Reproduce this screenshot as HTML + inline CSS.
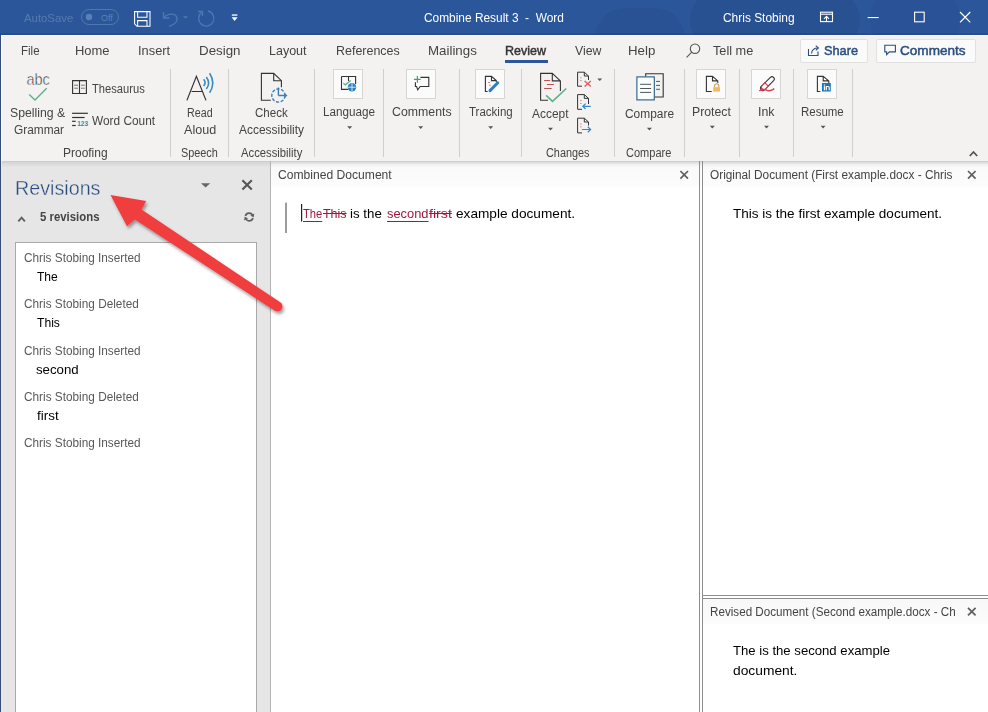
<!DOCTYPE html><html><head><meta charset="utf-8"><style>
html,body{margin:0;padding:0}
body{width:988px;height:712px;position:relative;overflow:hidden;font-family:"Liberation Sans",sans-serif;background:#fff}
.a{position:absolute}
.t{position:absolute;white-space:pre;transform-origin:0 0}
svg{position:absolute;overflow:visible}
</style></head><body>
<!-- window left border -->
<div class="a" style="left:0;top:0;width:988px;height:35px;background:#2b579a"></div>
<div class="a" style="left:0;top:0;width:988px;height:35px;overflow:hidden">
<div class="a" style="left:690px;top:-10px;width:170px;height:60px;border-radius:30px;background:rgba(10,25,70,0.09)"></div>
<div class="a" style="left:595px;top:8px;width:90px;height:60px;border-radius:45px;background:rgba(10,25,70,0.07)"></div>
<div class="a" style="left:870px;top:-20px;width:90px;height:80px;border-radius:45px;background:rgba(10,25,70,0.05)"></div>
</div>
<!-- ribbon -->
<div class="a" style="left:1px;top:35px;width:987px;height:126px;background:#f3f2f1"></div>
<div class="a" style="left:1px;top:35px;width:987px;height:1px;background:#f7f8fa"></div>
<!-- below ribbon -->
<div class="a" style="left:1px;top:161px;width:270px;height:551px;background:#e6e6e6"></div>
<div class="a" style="left:1px;top:161px;width:269px;height:6px;background:linear-gradient(#c8c8c8,#d8d8d8 30%,#e4e4e4)"></div>
<div class="a" style="left:1px;top:161px;width:1px;height:551px;background:#e2eaf5"></div>
<div class="a" style="left:1px;top:35px;width:1px;height:126px;background:#fbfcfe"></div>
<div class="a" style="left:0;top:33px;width:988px;height:2px;background:rgba(20,40,80,0.18)"></div>
<div class="a" style="left:270px;top:161px;width:1px;height:551px;background:#b4b4b4"></div>
<!-- doc panes -->
<div class="a" style="left:271px;top:161px;width:717px;height:551px;background:#fff"></div>
<div class="a" style="left:271px;top:161px;width:717px;height:26px;background:linear-gradient(#c8c8c8 0px,#dedede 1.5px,#f3f3f3 4px,#fafafa 7px,#fcfcfc 26px)"></div>
<div class="a" style="left:699px;top:161px;width:1px;height:551px;background:#8e8e8e"></div>
<div class="a" style="left:702px;top:161px;width:1px;height:551px;background:#8e8e8e"></div>
<div class="a" style="left:703px;top:595px;width:285px;height:1px;background:#8e8e8e"></div>
<div class="a" style="left:703px;top:598px;width:285px;height:1px;background:#8e8e8e"></div>
<div class="a" style="left:703px;top:599px;width:285px;height:25px;background:linear-gradient(#f8f8f8,#fcfcfc)"></div>
<div class="a" style="left:0;top:35px;width:1px;height:677px;background:#34507a"></div>
<!-- revisions list box -->
<div class="a" style="left:15px;top:242px;width:240px;height:480px;background:#fff;border:1px solid #a9a9a9"></div>
<!-- tab underline -->
<div class="a" style="left:505px;top:60px;width:43px;height:3px;background:#2b579a"></div>
<!-- share / comments buttons -->
<div class="a" style="left:800px;top:39px;width:66px;height:22px;background:#fafafa;border:1px solid #e1e1e1;border-radius:2px"></div>
<div class="a" style="left:876px;top:39px;width:98px;height:22px;background:#fafafa;border:1px solid #e1e1e1;border-radius:2px"></div>
<!-- ribbon separators -->
<div class="a" style="left:170px;top:69px;width:1px;height:88px;background:#cfcfcf"></div>
<div class="a" style="left:228px;top:69px;width:1px;height:88px;background:#cfcfcf"></div>
<div class="a" style="left:314px;top:69px;width:1px;height:88px;background:#cfcfcf"></div>
<div class="a" style="left:383px;top:69px;width:1px;height:88px;background:#cfcfcf"></div>
<div class="a" style="left:459px;top:69px;width:1px;height:88px;background:#cfcfcf"></div>
<div class="a" style="left:521px;top:69px;width:1px;height:88px;background:#cfcfcf"></div>
<div class="a" style="left:614px;top:69px;width:1px;height:88px;background:#cfcfcf"></div>
<div class="a" style="left:684px;top:69px;width:1px;height:88px;background:#cfcfcf"></div>
<div class="a" style="left:739px;top:69px;width:1px;height:88px;background:#cfcfcf"></div>
<div class="a" style="left:793px;top:69px;width:1px;height:88px;background:#cfcfcf"></div>
<div class="a" style="left:852px;top:69px;width:1px;height:88px;background:#cfcfcf"></div>
<!-- icon boxes -->
<div class="a" style="left:333px;top:69px;width:28px;height:28px;background:#fbfbfb;border:1px solid #d6d6d6"></div>
<div class="a" style="left:406px;top:69px;width:28px;height:28px;background:#fbfbfb;border:1px solid #d6d6d6"></div>
<div class="a" style="left:475px;top:69px;width:28px;height:28px;background:#fbfbfb;border:1px solid #d6d6d6"></div>
<div class="a" style="left:696px;top:69px;width:28px;height:28px;background:#fbfbfb;border:1px solid #d6d6d6"></div>
<div class="a" style="left:751px;top:69px;width:28px;height:28px;background:#fbfbfb;border:1px solid #d6d6d6"></div>
<div class="a" style="left:807px;top:69px;width:28px;height:28px;background:#fbfbfb;border:1px solid #d6d6d6"></div>
<svg width="988" height="712" viewBox="0 0 988 712" style="left:0;top:0">
<!-- ===== title bar ===== -->
<g fill="none" stroke="#4f78b2" stroke-width="1">
  <rect x="81.5" y="9.5" width="37" height="15" rx="7.5"/>
</g>
<circle cx="89" cy="17" r="3.2" fill="#5a80b8"/>
<text x="101" y="20.6" font-size="9" fill="#5a80b8" font-family="Liberation Sans">Off</text>
<!-- save -->
<g fill="none" stroke="#fff" stroke-width="1.05">
  <path d="M134.6 11.6 H150 V26.3 H137 L134.6 23.9 Z"/>
  <path d="M137.6 11.6 V17.2 H147 V11.6"/>
  <path d="M137.6 26.3 V20.6 H147 V26.3"/>
</g>
<!-- undo (dim) -->
<g fill="none" stroke="#4f77b0" stroke-width="1.3">
  <path d="M164 17.5 C168 13,176 13,177 18 C178 22,173 25,169 26.3"/>
  <path d="M163.5 12 V18 H169.5"/>
</g>
<path d="M183 16.3 H188 L185.5 18.8 Z" fill="#4f77b0"/>
<!-- redo (dim) -->
<g fill="none" stroke="#4f77b0" stroke-width="1.3">
  <path d="M201.5 12.5 A7.6 7.6 0 1 0 208 11"/>
  <path d="M198 11.5 H202.5 V16"/>
</g>
<!-- customize -->
<rect x="231.8" y="14.4" width="5.6" height="1.3" fill="#fff"/>
<path d="M231.6 17.3 H237.6 L234.6 21 Z" fill="#fff"/>
<!-- ribbon display options -->
<g fill="none" stroke="#fff" stroke-width="1.1">
  <rect x="820.5" y="12.2" width="12" height="9.4"/>
  <path d="M820.5 14.2 H832.5"/>
  <path d="M826.5 21.5 V16.5 M824 18.8 L826.5 16.3 L829 18.8"/>
</g>
<!-- min / max / close -->
<rect x="867.7" y="17" width="11" height="1.1" fill="#fff"/>
<rect x="914.6" y="12.2" width="9.6" height="9.6" fill="none" stroke="#fff" stroke-width="1.1"/>
<path d="M960 12 L970.3 22.3 M970.3 12 L960 22.3" stroke="#fff" stroke-width="1.2" fill="none"/>

<!-- ===== tabs row ===== -->
<g fill="none" stroke="#555" stroke-width="1.1">
  <circle cx="695" cy="48.7" r="4.7"/>
  <path d="M691.8 52.2 L686.6 57.4"/>
</g>
<!-- share icon -->
<g fill="none" stroke="#2b4f80" stroke-width="1.1">
  <path d="M808.5 49 V55.5 H818 V51.5"/>
  <path d="M811.5 53.5 C812 49.5,814 48,818 48"/>
  <path d="M815.8 45.6 L818.4 48 L815.8 50.4"/>
</g>
<!-- comments icon -->
<path d="M884.8 45.3 H895.4 V51.9 H889.4 L886.6 54.6 V51.9 H884.8 Z" fill="none" stroke="#2b4f80" stroke-width="1.1"/>

<!-- ===== ribbon icons ===== -->
<!-- abc + check -->
<text x="26.4" y="84.6" font-size="16.2" fill="#333" stroke="#f3f2f1" stroke-width="0.45" font-family="Liberation Sans" textLength="23.4" lengthAdjust="spacingAndGlyphs">abc</text>
<path d="M29.2 94.4 L35 100 L46.7 88.3" fill="none" stroke="#5bb28a" stroke-width="1.4"/>
<!-- thesaurus book -->
<g fill="none" stroke="#333" stroke-width="1.1">
  <path d="M72.6 80.6 H86.4 V93.5 H72.6 Z M79.5 80.6 V93.5"/>
</g>
<rect x="74.2" y="84.7" width="3.8" height="1" fill="#c0504d"/>
<rect x="81" y="84.7" width="3.8" height="1" fill="#777"/>
<rect x="74.2" y="87.7" width="3.8" height="1" fill="#777"/>
<rect x="81" y="87.7" width="3.8" height="1" fill="#777"/>
<!-- word count -->
<rect x="72.1" y="112.7" width="15.8" height="1.2" fill="#333"/>
<rect x="72.1" y="116.9" width="12.5" height="1.2" fill="#333"/>
<rect x="72.1" y="120.7" width="3.6" height="1.2" fill="#333"/>
<rect x="72.1" y="124.9" width="3.6" height="1.2" fill="#333"/>
<text x="77.2" y="126.2" font-size="7.6" font-weight="700" fill="#2d87bf" font-family="Liberation Sans" textLength="10.8" lengthAdjust="spacingAndGlyphs">123</text>
<!-- read aloud -->
<g fill="none" stroke="#333" stroke-width="1.2">
  <path d="M186.9 100.4 L196.4 76.3 L206 100.4 M191.6 91.5 H202.3"/>
</g>
<g fill="none" stroke="#3c8bbf" stroke-width="1.6">
  <path d="M203.6 79.2 Q206.6 82.6 203.6 86"/>
  <path d="M206.3 76.9 Q211 83 206.3 89.1"/>
  <path d="M209.6 73.2 Q216 83 209.6 92.7"/>
</g>
<!-- check accessibility -->
<g fill="none" stroke="#333" stroke-width="1.1">
  <path d="M270.8 100.3 H261.4 V73.4 H273.7 L281.4 80.7 V87.2"/>
  <path d="M273.7 73.4 V80.7 H281.4"/>
</g>
<g fill="none" stroke="#3d7fb5" stroke-width="1.4">
  <circle cx="278.4" cy="95.5" r="6.6" stroke-dasharray="3.2 1.6"/>
  <path d="M278.4 95.5 V87.5 M278.4 95.5 H286"/>
</g>
<path d="M284.5 93 L287.5 95.5 L284.5 98 Z" fill="#3d7fb5"/>
<!-- language -->
<g fill="none" stroke="#333" stroke-width="1.1">
  <path d="M341.5 76.5 H355.6 V84 M341.5 76.5 V89.4 H348.5 M348.5 76.5 V81"/>
</g>
<path d="M343.4 83.2 L345.3 84.8 L350.8 80.4" fill="none" stroke="#5bb28a" stroke-width="1.3"/>
<circle cx="352" cy="87.2" r="4.2" fill="#2d7fc0"/>
<path d="M348.2 87.2 H355.8 M352 83.2 V91.2" stroke="#fff" stroke-width="0.8"/>
<!-- comments -->
<path d="M420.4 77.4 H428.8 V86.5 H420.2 L417.7 89.8 L416.6 86.5 H415.4 V82.2" fill="none" stroke="#333" stroke-width="1.1"/>
<path d="M413.9 79.4 H420.7 M417.4 76.1 V82.7" stroke="#3aa46f" stroke-width="1.2"/>
<!-- tracking -->
<g fill="none" stroke="#333" stroke-width="1.1">
  <path d="M487.7 91.5 H485.4 V76.4 H491.5 L496.3 80.6 V82 M491.5 76.4 V80.6 H496.3"/>
</g>
<rect x="488.2" y="82" width="1.8" height="0.9" fill="#d4607a"/>
<rect x="489" y="84.8" width="1.7" height="0.9" fill="#d4607a"/>
<path d="M490 90.6 L497.8 82.8" stroke="#2f7ec0" stroke-width="3" stroke-linecap="round"/>
<!-- accept -->
<g fill="none" stroke="#333" stroke-width="1.1">
  <path d="M548 100.3 H540.6 V73.4 H552.3 L560.4 80.9 V91 M552.3 73.4 V80.9 H560.4"/>
</g>
<rect x="544.1" y="80" width="6" height="1" fill="#c0504d"/>
<rect x="546.9" y="84" width="7" height="1" fill="#c0504d"/>
<rect x="544.1" y="88" width="7.6" height="1" fill="#c0504d"/>
<path d="M546.1 95.3 L552.5 101.3 L566.3 88.5" fill="none" stroke="#5bb28a" stroke-width="1.6"/>
<!-- small change icons -->
<g fill="none" stroke="#333" stroke-width="1">
  <path d="M582 86.2 H577.6 V72.2 H584.3 L588.5 76 V80 M584.3 72.2 V76 H588.5"/>
  <path d="M582 109.3 H577.6 V94.6 H584.3 L588.5 98.4 V104 M584.3 94.6 V98.4 H588.5"/>
  <path d="M582 132.9 H577.6 V118.2 H584.3 L588.5 122 V125.5 M584.3 118.2 V122 H588.5"/>
</g>
<path d="M584.6 81 L590.8 86.6 M590.8 81 L584.6 86.6" stroke="#e05a5a" stroke-width="1.3"/>
<rect x="580.2" y="77.4" width="1.4" height="0.9" fill="#c87080"/>
<rect x="580.2" y="80.2" width="1.4" height="0.9" fill="#c87080"/>
<rect x="580.2" y="100.2" width="1.4" height="0.9" fill="#c87080"/>
<rect x="580.2" y="103" width="1.4" height="0.9" fill="#c87080"/>
<rect x="580.2" y="123.6" width="1.4" height="0.9" fill="#c87080"/>
<rect x="580.2" y="126.4" width="1.4" height="0.9" fill="#c87080"/>
<path d="M590.7 106.3 H583 M585.6 103.6 L582.8 106.3 L585.6 109" fill="none" stroke="#2f8ad0" stroke-width="1.2"/>
<path d="M581.8 129.5 H590.4 M587.8 126.8 L590.6 129.5 L587.8 132.2" fill="none" stroke="#2f8ad0" stroke-width="1.2"/>
<path d="M597.3 78.5 H602.2 L599.75 81 Z" fill="#555"/>
<!-- compare -->
<path d="M645.7 76.4 V73.8 H663.2 V97 H654.7" fill="none" stroke="#333" stroke-width="1.1"/>
<rect x="636.9" y="76.9" width="17.4" height="23" fill="#f8fdff" stroke="#2b5a80" stroke-width="1.1"/>
<rect x="640.1" y="83.8" width="11" height="1" fill="#555"/>
<rect x="640.1" y="88" width="11" height="1" fill="#555"/>
<rect x="640.1" y="91.9" width="11" height="1" fill="#555"/>
<rect x="656.1" y="80.9" width="3.9" height="1" fill="#555"/>
<rect x="656.1" y="84.9" width="3.9" height="1" fill="#555"/>
<rect x="656.1" y="88.8" width="3.9" height="1" fill="#555"/>
<!-- protect -->
<g fill="none" stroke="#333" stroke-width="1.1">
  <path d="M711.7 91.5 H706.4 V76.4 H712.5 L717.8 80.9 V83 M712.5 76.4 V80.9 H717.8"/>
</g>
<path d="M714.6 87.4 V85.8 A2.1 2.1 0 0 1 718.8 85.8 V87.4" fill="none" stroke="#c89a5c" stroke-width="1.1"/>
<rect x="713.2" y="87.2" width="6.8" height="4.4" fill="#f3b95f"/>
<!-- ink -->
<g transform="translate(767.6 83.4) rotate(-45)">
  <rect x="-9" y="-2.3" width="17.5" height="4.6" rx="2.3" fill="#fff" stroke="#333" stroke-width="1.1"/>
  <path d="M-9.5 0 L-6 -2.3 H-1.5 V2.3 H-6 Z" fill="#fff" stroke="#d9384a" stroke-width="1.1"/>
  <path d="M-9.8 0 L-7 -1.4 V1.4 Z" fill="#d9384a"/>
</g>
<path d="M759.2 91 C762.5 88.6,765.5 89.6,767.8 90.6 C770 91.4,772 89.8,774.3 88.8" fill="none" stroke="#e0404f" stroke-width="1.5"/>
<!-- resume -->
<g fill="none" stroke="#333" stroke-width="1.1">
  <path d="M820.4 91.5 H817.4 V76.4 H823.2 L828.8 80.9 V83 M823.2 76.4 V80.9 H828.8"/>
</g>
<rect x="822" y="83" width="8.8" height="8.5" fill="#1e75b5"/>
<rect x="823.8" y="86.3" width="1.3" height="4" fill="#fff"/>
<rect x="823.8" y="84.4" width="1.3" height="1.2" fill="#fff"/>
<path d="M826.3 90.3 V86.5 H828.2 A1 1 0 0 1 829.2 87.5 V90.3" fill="none" stroke="#fff" stroke-width="1.2"/>
<!-- dropdown arrows under big buttons -->
<g fill="#555">
  <path d="M347.2 126.2 H352.2 L349.7 129 Z"/>
  <path d="M418.2 126.2 H423.2 L420.7 129 Z"/>
  <path d="M488.2 126.2 H493.2 L490.7 129 Z"/>
  <path d="M548 127.7 H553 L550.5 130.5 Z"/>
  <path d="M646.9 127.7 H651.9 L649.4 130.5 Z"/>
  <path d="M709.8 125.8 H714.8 L712.3 128.6 Z"/>
  <path d="M764 125.8 H769 L766.5 128.6 Z"/>
  <path d="M820.6 125.8 H825.6 L823.1 128.6 Z"/>
</g>
<!-- collapse ribbon -->
<path d="M969.8 156 L973.5 152 L977.2 156" fill="none" stroke="#555" stroke-width="1.8"/>

<!-- ===== revisions pane ===== -->
<path d="M201 183.2 H210.2 L205.6 187.6 Z" fill="#666"/>
<path d="M242.4 180.2 L251.8 189.6 M251.8 180.2 L242.4 189.6" stroke="#555" stroke-width="2.1"/>
<path d="M18.3 221.3 L21.6 217.6 L24.9 221.3" fill="none" stroke="#606060" stroke-width="1.9"/>
<g fill="none" stroke="#606060" stroke-width="1.7">
  <path d="M245.43 215.99 A3.9 3.9 0 0 1 252.58 215.05"/>
  <path d="M252.97 218.01 A3.9 3.9 0 0 1 245.82 218.95"/>
</g>
<path d="M253.78 217.13 L254.27 213.38 L250.29 215.68 Z" fill="#606060"/>
<path d="M244.62 216.87 L244.13 220.62 L248.11 218.32 Z" fill="#606060"/>
<!-- doc pane close X -->
<g stroke="#606060" stroke-width="1.75">
  <path d="M680.4 171 L688 178.6 M688 171 L680.4 178.6"/>
  <path d="M968 171 L975.6 178.6 M975.6 171 L968 178.6"/>
  <path d="M968 607.8 L975.6 615.4 M975.6 607.8 L968 615.4"/>
</g>
<!-- combined doc margin bar & cursor -->
<rect x="285" y="202.6" width="2" height="30.4" fill="#9c9c9c"/>
<rect x="301" y="204" width="1.2" height="17.5" fill="#222"/>
</svg>

<div class="t" id="autosave" style="left:24.00px;top:12.57px;font-size:11.5px;line-height:11.5px;color:rgba(255,255,255,0.2);font-weight:400;transform:scaleX(0.9880);">AutoSave</div>
<div class="t" id="title" style="left:423.61px;top:11.74px;font-size:12px;line-height:12px;color:#fff;font-weight:400;transform:scaleX(0.9907);">Combine Result 3 &nbsp;- &nbsp;Word</div>
<div class="t" id="user" style="left:722.60px;top:11.84px;font-size:12px;line-height:12px;color:#fff;font-weight:400;transform:scaleX(0.9944);">Chris Stobing</div>
<div class="t" id="tfile" style="left:21.06px;top:44.30px;font-size:13px;line-height:13px;color:#444;font-weight:400;transform:scaleX(0.8850);">File</div>
<div class="t" id="thome" style="left:74.80px;top:44.30px;font-size:13px;line-height:13px;color:#444;font-weight:400;transform:scaleX(0.9971);">Home</div>
<div class="t" id="tins" style="left:138.41px;top:44.30px;font-size:13px;line-height:13px;color:#444;font-weight:400;transform:scaleX(0.9875);">Insert</div>
<div class="t" id="tdes" style="left:198.97px;top:44.30px;font-size:13px;line-height:13px;color:#444;font-weight:400;transform:scaleX(1.0256);">Design</div>
<div class="t" id="tlay" style="left:269.02px;top:44.30px;font-size:13px;line-height:13px;color:#444;font-weight:400;transform:scaleX(0.9615);">Layout</div>
<div class="t" id="tref" style="left:336.02px;top:44.30px;font-size:13px;line-height:13px;color:#444;font-weight:400;transform:scaleX(0.9591);">References</div>
<div class="t" id="tmail" style="left:427.79px;top:44.30px;font-size:13px;line-height:13px;color:#444;font-weight:400;transform:scaleX(1.0234);">Mailings</div>
<div class="t" id="tview" style="left:574.58px;top:44.30px;font-size:13px;line-height:13px;color:#444;font-weight:400;transform:scaleX(0.9464);">View</div>
<div class="t" id="thelp" style="left:628.38px;top:44.30px;font-size:13px;line-height:13px;color:#444;font-weight:400;transform:scaleX(1.0192);">Help</div>
<div class="t" id="ttell" style="left:712.99px;top:44.30px;font-size:13px;line-height:13px;color:#444;font-weight:400;transform:scaleX(0.9786);">Tell me</div>
<div class="t" id="trev" style="left:505.41px;top:44.30px;font-size:13px;line-height:13px;color:#333;font-weight:400;transform:scaleX(0.9605);-webkit-text-stroke:0.45px #333;">Review</div>
<div class="t" id="share" style="left:824.00px;top:43.87px;font-size:13.5px;line-height:13.5px;color:#2b4f80;font-weight:400;transform:scaleX(0.9444);-webkit-text-stroke:0.5px #2b4f80;">Share</div>
<div class="t" id="comm" style="left:900.20px;top:43.87px;font-size:13.5px;line-height:13.5px;color:#2b4f80;font-weight:400;transform:scaleX(1.0046);-webkit-text-stroke:0.5px #2b4f80;">Comments</div>
<div class="t" id="spell" style="left:10.38px;top:107.34px;font-size:12px;line-height:12px;color:#444;font-weight:400;transform:scaleX(1.0226);">Spelling &</div>
<div class="t" id="gram" style="left:14.20px;top:123.64px;font-size:12px;line-height:12px;color:#444;font-weight:400;transform:scaleX(0.9880);">Grammar</div>
<div class="t" id="thes" style="left:92.00px;top:82.74px;font-size:12px;line-height:12px;color:#444;font-weight:400;transform:scaleX(0.9298);">Thesaurus</div>
<div class="t" id="wc" style="left:92.19px;top:115.04px;font-size:12px;line-height:12px;color:#444;font-weight:400;transform:scaleX(0.9877);">Word Count</div>
<div class="t" id="gproof" style="left:63.40px;top:146.84px;font-size:12px;line-height:12px;color:#444;font-weight:400;transform:scaleX(0.9977);">Proofing</div>
<div class="t" id="read" style="left:187.05px;top:107.34px;font-size:12px;line-height:12px;color:#444;font-weight:400;transform:scaleX(0.8929);">Read</div>
<div class="t" id="aloud" style="left:184.00px;top:123.64px;font-size:12px;line-height:12px;color:#444;font-weight:400;transform:scaleX(1.0467);">Aloud</div>
<div class="t" id="gspeech" style="left:181.05px;top:146.84px;font-size:12px;line-height:12px;color:#444;font-weight:400;transform:scaleX(0.9050);">Speech</div>
<div class="t" id="check" style="left:255.02px;top:107.34px;font-size:12px;line-height:12px;color:#444;font-weight:400;transform:scaleX(0.9618);">Check</div>
<div class="t" id="acc" style="left:239.00px;top:123.64px;font-size:12px;line-height:12px;color:#444;font-weight:400;transform:scaleX(0.9954);">Accessibility</div>
<div class="t" id="gacc" style="left:241.00px;top:146.84px;font-size:12px;line-height:12px;color:#444;font-weight:400;transform:scaleX(0.9385);">Accessibility</div>
<div class="t" id="lang" style="left:322.82px;top:106.04px;font-size:12px;line-height:12px;color:#444;font-weight:400;transform:scaleX(0.9736);">Language</div>
<div class="t" id="rcomm" style="left:391.78px;top:106.04px;font-size:12px;line-height:12px;color:#444;font-weight:400;transform:scaleX(1.0281);">Comments</div>
<div class="t" id="track" style="left:469.18px;top:106.04px;font-size:12px;line-height:12px;color:#444;font-weight:400;transform:scaleX(0.9587);">Tracking</div>
<div class="t" id="accept" style="left:532.40px;top:108.24px;font-size:12px;line-height:12px;color:#444;font-weight:400;transform:scaleX(0.9946);">Accept</div>
<div class="t" id="gchg" style="left:546.00px;top:146.84px;font-size:12px;line-height:12px;color:#444;font-weight:400;transform:scaleX(0.9062);">Changes</div>
<div class="t" id="cmp" style="left:625.00px;top:108.24px;font-size:12px;line-height:12px;color:#444;font-weight:400;transform:scaleX(0.9939);">Compare</div>
<div class="t" id="gcmp" style="left:625.85px;top:146.84px;font-size:12px;line-height:12px;color:#444;font-weight:400;transform:scaleX(0.9184);">Compare</div>
<div class="t" id="prot" style="left:691.98px;top:106.24px;font-size:12px;line-height:12px;color:#444;font-weight:400;transform:scaleX(1.0216);">Protect</div>
<div class="t" id="ink" style="left:757.98px;top:106.24px;font-size:12px;line-height:12px;color:#444;font-weight:400;transform:scaleX(1.0312);">Ink</div>
<div class="t" id="res" style="left:801.44px;top:106.24px;font-size:12px;line-height:12px;color:#444;font-weight:400;transform:scaleX(0.9568);">Resume</div>
<div class="t" id="revs" style="left:14.58px;top:178.89px;font-size:19.5px;line-height:19.5px;color:#284c7e;font-weight:400;transform:scaleX(1.0110);-webkit-text-stroke:0.32px #e6e6e6;">Revisions</div>
<div class="t" id="nrev" style="left:39.83px;top:211.44px;font-size:12px;line-height:12px;color:#444;font-weight:700;transform:scaleX(0.9484);">5 revisions</div>
<div class="t" id="eh0" style="left:24.20px;top:251.54px;font-size:12px;line-height:12px;color:#595959;font-weight:400;transform:scaleX(0.9824);">Chris Stobing Inserted</div>
<div class="t" id="eh1" style="left:24.20px;top:297.64px;font-size:12px;line-height:12px;color:#595959;font-weight:400;transform:scaleX(0.9838);">Chris Stobing Deleted</div>
<div class="t" id="eh2" style="left:24.20px;top:344.74px;font-size:12px;line-height:12px;color:#595959;font-weight:400;transform:scaleX(0.9824);">Chris Stobing Inserted</div>
<div class="t" id="eh3" style="left:24.20px;top:390.54px;font-size:12px;line-height:12px;color:#595959;font-weight:400;transform:scaleX(0.9838);">Chris Stobing Deleted</div>
<div class="t" id="eh4" style="left:24.20px;top:437.44px;font-size:12px;line-height:12px;color:#595959;font-weight:400;transform:scaleX(0.9824);">Chris Stobing Inserted</div>
<div class="t" id="ew0" style="left:36.96px;top:269.70px;font-size:13px;line-height:13px;color:#000;font-weight:400;transform:scaleX(0.9261);">The</div>
<div class="t" id="ew1" style="left:36.97px;top:315.80px;font-size:13px;line-height:13px;color:#000;font-weight:400;transform:scaleX(0.9320);">This</div>
<div class="t" id="ew2" style="left:35.99px;top:362.90px;font-size:13px;line-height:13px;color:#000;font-weight:400;transform:scaleX(1.0171);">second</div>
<div class="t" id="ew3" style="left:37.02px;top:408.70px;font-size:13px;line-height:13px;color:#000;font-weight:400;transform:scaleX(1.0318);">first</div>
<div class="t" id="cdoc" style="left:278.00px;top:168.64px;font-size:12px;line-height:12px;color:#444;font-weight:400;transform:scaleX(1.0088);">Combined Document</div>
<div class="t" id="odoc" style="left:710.21px;top:168.54px;font-size:12px;line-height:12px;color:#444;font-weight:400;transform:scaleX(0.9854);">Original Document (First example.docx - Chris</div>
<div class="t" id="rdoc" style="left:710.21px;top:605.54px;font-size:12px;line-height:12px;color:#444;font-weight:400;transform:scaleX(0.9718);">Revised Document (Second example.docx - Ch</div>
<div class="t" id="c1" style="left:302.75px;top:206.70px;font-size:13px;line-height:13px;color:#a3173f;font-weight:400;transform:scaleX(0.8609);"><span style="text-decoration:underline;text-underline-offset:2.5px;text-decoration-thickness:1px">The</span></div>
<div class="t" id="c2" style="left:323.00px;top:206.70px;font-size:13px;line-height:13px;color:#a3173f;font-weight:400;transform:scaleX(0.9600);"><span style="text-decoration:line-through">This</span></div>
<div class="t" id="c3" style="left:350.19px;top:206.70px;font-size:13px;line-height:13px;color:#000;font-weight:400;transform:scaleX(1.0226);">is the</div>
<div class="t" id="c4" style="left:386.80px;top:206.70px;font-size:13px;line-height:13px;color:#a3173f;font-weight:400;transform:scaleX(0.9907);"><span style="text-decoration:underline;text-underline-offset:2.5px;text-decoration-thickness:1px">second</span></div>
<div class="t" id="c5" style="left:429.42px;top:206.70px;font-size:13px;line-height:13px;color:#a3173f;font-weight:400;transform:scaleX(1.0952);"><span style="text-decoration:line-through">first</span></div>
<div class="t" id="c6" style="left:455.59px;top:206.70px;font-size:13px;line-height:13px;color:#000;font-weight:400;transform:scaleX(1.0496);">example document.</div>
<div class="t" id="otext" style="left:733.41px;top:206.50px;font-size:13px;line-height:13px;color:#000;font-weight:400;transform:scaleX(1.0405);">This is the first example document.</div>
<div class="t" id="rtext1" style="left:733.40px;top:644.10px;font-size:13px;line-height:13px;color:#000;font-weight:400;transform:scaleX(1.0103);">The is the second example</div>
<div class="t" id="rtext2" style="left:733.38px;top:663.60px;font-size:13px;line-height:13px;color:#000;font-weight:400;transform:scaleX(1.0617);">document.</div>
<svg width="988" height="712" viewBox="0 0 988 712" style="left:0;top:0">
<defs><filter id="sh" x="-20%" y="-20%" width="140%" height="140%"><feDropShadow dx="1.5" dy="2.5" stdDeviation="1.6" flood-color="#000" flood-opacity="0.38"/></filter></defs>
<path d="M110.5 195.1 L146.2 201 L141.5 209.5 L280.25 302.3 A5 5 0 0 1 274.75 310.67 L134.8 219.5 L127 226.3 Z" fill="#f03c3e" filter="url(#sh)"/>
</svg>

</body></html>
